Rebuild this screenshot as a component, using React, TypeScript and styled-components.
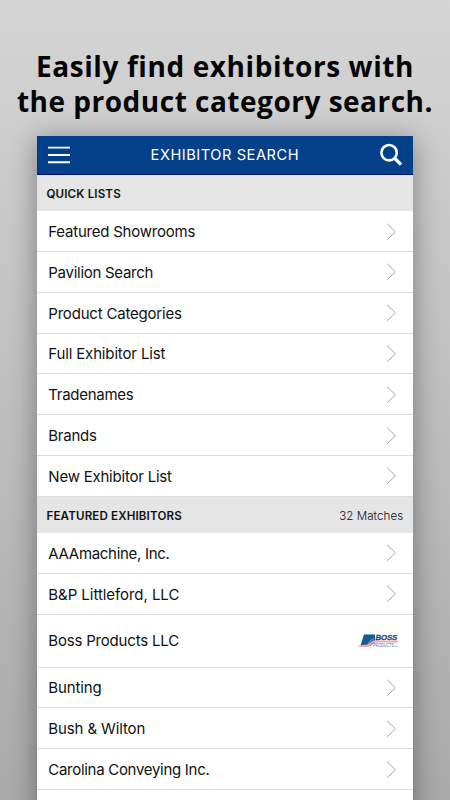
import React from "react";
import styled, { createGlobalStyle } from "styled-components";

const GlobalStyle = createGlobalStyle`
  * { box-sizing: border-box; }
  html, body { margin: 0; height: 100%; overflow: hidden; }
`;

const Page = styled.main`
  width: 450px;
  height: 800px;
  overflow: hidden;
  display: flex;
  flex-direction: column;
  align-items: center;
  background: linear-gradient(#d5d5d5 0%, #cdcdcd 17%, #aaaaaa 100%);
`;

const Headline = styled.h1`
  margin: 0;
  height: 136px;
  flex: none;
  padding-top: 49px;
  font: 700 28px/35px "Open Sans", "Noto Sans", sans-serif;
  color: #050505;
  text-align: center;
  white-space: nowrap;
`;

const Line = styled.span<{ $spacing: number }>`
  display: block;
  letter-spacing: ${(p) => p.$spacing}px;
`;

const Panel = styled.section`
  width: 375.4px;
  height: 700px;
  flex: none;
  background: #fff;
  box-shadow: 0 4px 26px rgba(0, 0, 0, 0.38);
  font-family: Inter, "Liberation Sans", sans-serif;
  color: #111;
`;

const TopBar = styled.header`
  height: 39px;
  display: flex;
  align-items: center;
  justify-content: space-between;
  padding: 0 10px 0 10.7px;
  background: #04408a;
  border-bottom: 1px solid #00146f;
  color: #fff;
`;

const Title = styled.h2`
  margin: 0;
  font-size: 14.6px;
  font-weight: 400;
  letter-spacing: 0.55px;
`;

const SectionBar = styled.div`
  height: 36.2px;
  display: flex;
  align-items: center;
  justify-content: space-between;
  padding: 1.4px 9.5px 0 9.2px;
  background: #e5e5e5;
`;

const SectionTitle = styled.h3`
  margin: 0;
  font-size: 11.6px;
  font-weight: 600;
  letter-spacing: 0.14px;
`;

const Matches = styled.span`
  font-size: 11.6px;
  font-weight: 300;
  letter-spacing: 0.04px;
`;

const List = styled.ul`
  margin: 0;
  padding: 0;
  list-style: none;
`;

const Row = styled.li<{ $tall?: boolean; $tracking?: number }>`
  height: ${(p) => (p.$tall ? 53 : 40.8)}px;
  display: flex;
  align-items: center;
  justify-content: space-between;
  padding: ${(p) => (p.$tall ? 0 : 1)}px 15px 0 11px;
  border-bottom: 1px solid #dcdcdc;
  font-size: 15px;
  font-weight: 400;
  letter-spacing: ${(p) => p.$tracking ?? -0.2}px;
`;

const LogoSlot = styled.span`
  display: flex;
  margin-right: -1px;
`;

const Chevron = () => (
  <svg width="13" height="18" viewBox="0 0 13 18" fill="none" stroke="#a6a6a6" strokeWidth="1">
    <path d="M2.2 0.8L10.4 8.8L2.2 16.8" />
  </svg>
);

const MenuIcon = () => (
  <svg width="22" height="18" viewBox="0 0 22 18" stroke="#fff" strokeWidth="1.9">
    <path d="M0 1.6H22M0 9H22M0 16.2H22" />
  </svg>
);

const SearchIcon = () => (
  <svg width="23" height="24" viewBox="0 0 23 24" fill="none" stroke="#fff">
    <circle cx="9.1" cy="9.7" r="7.7" strokeWidth="2.6" />
    <path d="M14.4 15L21 21.6" strokeWidth="3.3" />
  </svg>
);

const BossLogo = () => (
  <svg width="40" height="16" viewBox="0 0 40 16" overflow="visible">
    <path d="M5 1.5H16V9L12 12.5H1.5Z" fill="#155b91" />
    <path d="M9 11.5Q10 7 15 5.5" fill="none" stroke="#8db7d0" strokeWidth="0.8" />
    <path d="M0 12.5L9 11.3L14 7.6H39.5L38.5 9.6H15L9 14H0Z" fill="#f3a6a8" />
    <text x="16.5" y="7.3" fontFamily="Liberation Sans, sans-serif" fontSize="8" fontWeight="700" fontStyle="italic" fill="#174e81" stroke="#174e81" strokeWidth="0.3" textLength="21.5" lengthAdjust="spacingAndGlyphs">BOSS</text>
    <text x="14" y="13.8" fontFamily="Liberation Sans, sans-serif" fontSize="5.2" fill="#4681aa" textLength="21" lengthAdjust="spacingAndGlyphs">PRODUCTS</text>
    <path d="M35.8 13.2H39" stroke="#91b2c8" strokeWidth="0.8" />
  </svg>
);

const quickLists: { name: string; tracking?: number }[] = [
  { name: "Featured Showrooms", tracking: -0.22 },
  { name: "Pavilion Search", tracking: -0.28 },
  { name: "Product Categories", tracking: -0.2 },
  { name: "Full Exhibitor List", tracking: -0.15 },
  { name: "Tradenames", tracking: -0.28 },
  { name: "Brands", tracking: -0.25 },
  { name: "New Exhibitor List", tracking: -0.22 },
];

const exhibitors: { name: string; logo?: boolean; tracking?: number }[] = [
  { name: "AAAmachine, Inc.", tracking: -0.3 },
  { name: "B&P Littleford, LLC", tracking: -0.05 },
  { name: "Boss Products LLC", logo: true, tracking: -0.19 },
  { name: "Bunting", tracking: -0.12 },
  { name: "Bush & Wilton", tracking: -0.12 },
  { name: "Carolina Conveying Inc.", tracking: -0.29 },
];

export default function App() {
  return (
    <>
      <GlobalStyle />
      <Page>
        <Headline>
          <Line $spacing={0.6}>Easily find exhibitors with</Line>
          <Line $spacing={0.5}>the product category search.</Line>
        </Headline>
        <Panel>
          <TopBar>
            <MenuIcon />
            <Title>EXHIBITOR SEARCH</Title>
            <SearchIcon />
          </TopBar>
          <SectionBar>
            <SectionTitle>QUICK LISTS</SectionTitle>
          </SectionBar>
          <List>
            {quickLists.map(({ name, tracking }) => (
              <Row key={name} $tracking={tracking}>
                {name}
                <Chevron />
              </Row>
            ))}
          </List>
          <SectionBar>
            <SectionTitle>FEATURED EXHIBITORS</SectionTitle>
            <Matches>32 Matches</Matches>
          </SectionBar>
          <List>
            {exhibitors.map(({ name, logo, tracking }) => (
              <Row key={name} $tall={logo} $tracking={tracking}>
                {name}
                {logo ? (
                  <LogoSlot>
                    <BossLogo />
                  </LogoSlot>
                ) : (
                  <Chevron />
                )}
              </Row>
            ))}
          </List>
        </Panel>
      </Page>
    </>
  );
}
